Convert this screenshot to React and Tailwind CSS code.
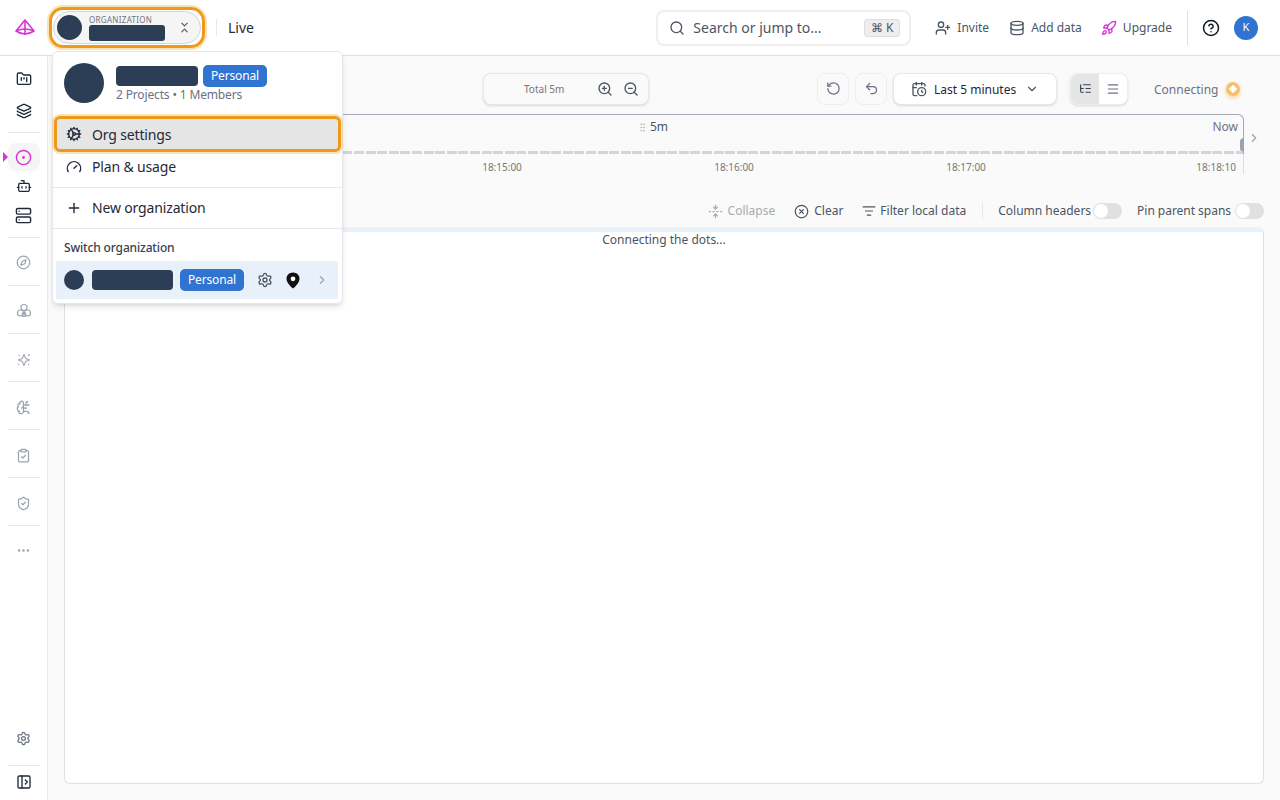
import {
  Search, UserPlus, Database, Rocket, CircleHelp, RotateCcw, Undo2, CalendarClock, ChevronDown,
  ListTree, Menu, ZoomIn, ZoomOut, GripVertical, CircleX, ListFilter, ChevronsDownUp, FolderKanban,
  Layers, CircleDot, Bot, Server, Compass, BrainCircuit, ClipboardCheck, ShieldCheck,
  Ellipsis, Settings, PanelLeftOpen, Cog, Gauge, Plus, ChevronRight, FoldVertical,
} from 'lucide-react';

const font = "font-['Noto_Sans',sans-serif]";

function Logo() {
  return (
    <svg width="22" height="20" viewBox="0 0 22 20" fill="none" stroke="#d633d6" strokeWidth="1.6" strokeLinejoin="round">
      <path d="M11 2 L20 13 Q11 19 2 13 Z" />
      <path d="M2 13 Q11 9 20 13" />
      <path d="M11 2 V17" />
    </svg>
  );
}

function Cluster() {
  return (
    <svg width="16" height="16" viewBox="0 0 16 16" fill="none" stroke="#9ca3af" strokeWidth="1.1">
      <circle cx="8" cy="4.5" r="3" />
      <circle cx="4.5" cy="10" r="3" />
      <circle cx="11.5" cy="10" r="3" />
      <circle cx="8" cy="11.5" r="2" />
    </svg>
  );
}

function Spark() {
  return (
    <svg width="16" height="16" viewBox="0 0 16 16" fill="none" stroke="#9ca3af" strokeWidth="1.1" strokeLinejoin="round">
      <path d="M8 2.5 L9.6 6.4 L13.5 8 L9.6 9.6 L8 13.5 L6.4 9.6 L2.5 8 L6.4 6.4 Z" />
      <circle cx="13" cy="3" r="0.9" fill="#9ca3af" stroke="none" />
      <circle cx="3" cy="3.5" r="0.7" fill="#9ca3af" stroke="none" />
      <circle cx="2.5" cy="12.5" r="0.7" fill="#9ca3af" stroke="none" />
      <circle cx="12.5" cy="12.5" r="0.7" fill="#9ca3af" stroke="none" />
    </svg>
  );
}

function Pin() {
  return (
    <svg width="14" height="17" viewBox="0 0 14 17" className="ml-[13px]">
      <path d="M7 0.5 C3.2 0.5 0.5 3.3 0.5 6.8 C0.5 11 5 15 7 16.5 C9 15 13.5 11 13.5 6.8 C13.5 3.3 10.8 0.5 7 0.5 Z" fill="#111111" />
      <circle cx="7" cy="6.8" r="2.4" fill="#ffffff" />
    </svg>
  );
}

function Divider() {
  return <div className="h-px w-[32px] bg-[#e5e7eb] shrink-0" />;
}

function Sidebar() {
  return (
    <aside className="w-[48px] shrink-0 bg-white border-r border-[#e5e7eb] flex flex-col items-center pt-[14px] pb-[10px]">
      <FolderKanban size={16} className="text-[#1f2937] my-[1px]" />
      <Layers size={16} className="text-[#1f2937] mt-[15px]" />
      <div className="mt-[13px]"><Divider /></div>
      <div className="relative mt-[10px] w-[32px] h-[28px] rounded-lg bg-[#f5f5f5] flex items-center justify-center">
        <span className="absolute left-[-5px] top-[9px] w-0 h-0 border-y-[5px] border-y-transparent border-l-[5px] border-l-[#d633d6]" />
        <CircleDot size={17} className="text-[#d633d6] [&>circle:last-child]:fill-current" />
      </div>
      <Bot size={16} className="text-[#1f2937] mt-[7px]" />
      <Server size={17} className="text-[#1f2937] mt-[13px]" />
      <div className="mt-[13px]"><Divider /></div>
      <Compass size={15} className="text-[#9ca3af] mt-[17px]" />
      <div className="mt-[15px]"><Divider /></div>
      <div className="mt-[17px]"><Cluster /></div>
      <div className="mt-[14px]"><Divider /></div>
      <div className="mt-[18px] h-[15px] flex items-center"><Spark /></div>
      <div className="mt-[14px]"><Divider /></div>
      <BrainCircuit size={15} className="text-[#9ca3af] mt-[18px]" />
      <div className="mt-[14px]"><Divider /></div>
      <ClipboardCheck size={15} className="text-[#9ca3af] mt-[18px]" />
      <div className="mt-[14px]"><Divider /></div>
      <ShieldCheck size={15} className="text-[#9ca3af] mt-[18px]" />
      <div className="mt-[14px]"><Divider /></div>
      <Ellipsis size={15} className="text-[#9ca3af] mt-[17px]" />
      <Settings size={15} className="text-[#6b7280] mt-auto" />
      <div className="mt-[19px]"><Divider /></div>
      <PanelLeftOpen size={16} className="text-[#1f2937] mt-[8px]" />
    </aside>
  );
}

function Header() {
  return (
    <header className="h-[56px] shrink-0 bg-white border-b border-[#e0e0e0] flex items-center pl-[14px] pr-[22px]">
      <Logo />
      <div className="ml-[13px] w-[156px] h-[41px] rounded-[14px] border-[3px] border-[#ec9a1d] shadow-[0_0_0_2px_rgba(245,158,11,0.3)] p-[1px]">
        <div className="h-full rounded-full border border-[#d1d5db] bg-[#f5f5f5] flex items-center pl-[3px] pr-[9px]">
          <div className="w-[25px] h-[25px] rounded-full bg-[#2c3e56] shrink-0" />
          <div className="ml-[7px] flex flex-col">
            <span className="text-[8px] leading-[9px] tracking-[0.3px] text-[#6b7280]">ORGANIZATION</span>
            <div className="mt-[1px] w-[76px] h-[16px] rounded-[3px] bg-[#2c3e56]" />
          </div>
          <ChevronsDownUp size={13} className="ml-auto text-[#4b5563]" />
        </div>
      </div>
      <div className="ml-[11px] w-px h-[17px] bg-[#e5e7eb]" />
      <span className="ml-[11px] text-[14px] text-[#1f2937]">Live</span>
      <div className="ml-auto w-[255px] h-[36px] rounded-lg border-2 border-[#eeeeee] flex items-center pl-[11px] pr-[9px] text-[#4b5563]">
        <Search size={16} />
        <span className="ml-[8px] text-[14px]">Search or jump to...</span>
        <span className="ml-auto h-[18px] px-[6px] rounded-[3px] border border-[#dddddd] bg-[#eeeeee] text-[12px] leading-[16px] text-[#4b5563]">⌘ K</span>
      </div>
      <div className="ml-[24px] flex items-center gap-[6px] text-[12px] text-[#4b5563]"><UserPlus size={16} />Invite</div>
      <div className="ml-[20px] flex items-center gap-[6px] text-[12px] text-[#4b5563]"><Database size={16} />Add data</div>
      <div className="ml-[19px] flex items-center gap-[6px] text-[12px] text-[#4b5563]"><Rocket size={16} className="text-[#d633d6]" />Upgrade</div>
      <div className="ml-[15px] w-px h-[34px] bg-[#e0e0e0]" />
      <CircleHelp size={18} className="ml-[14px] text-[#111827]" />
      <div className="ml-[14px] w-[24px] h-[24px] rounded-full bg-[#2f74d0] text-white text-[11px] flex items-center justify-center">K</div>
    </header>
  );
}

function Toggle() {
  return (
    <span className="w-[29px] h-[16px] rounded-full bg-[#e0e0e0] flex items-center pl-[1px]">
      <span className="w-[14px] h-[14px] rounded-full bg-white" />
    </span>
  );
}

function Toolbar() {
  return (
    <div className="h-[33px] flex items-center">
      <div className="ml-[419px] w-[166px] h-[32px] rounded-lg border border-[#e5e7eb] bg-[#fafafa] shadow-sm flex items-center text-[#4b5563]">
        <span className="ml-[40px] pt-[2px] text-[10px] text-[#777777]">Total 5m</span>
        <ZoomIn size={16} className="ml-[33px]" />
        <ZoomOut size={16} className="ml-[10px]" />
      </div>
      <button className="ml-[168px] w-[32px] h-[32px] rounded-lg border border-[#eeeeee] flex items-center justify-center text-[#6b7280]"><RotateCcw size={15} /></button>
      <button className="ml-[6px] w-[32px] h-[32px] rounded-lg border border-[#eeeeee] flex items-center justify-center text-[#6b7280]"><Undo2 size={15} /></button>
      <button className="ml-[6px] w-[164px] h-[32px] rounded-lg border border-[#e5e7eb] bg-white shadow-sm flex items-center pl-[17px] text-[12px] text-[#1f2937]">
        <CalendarClock size={16} className="text-[#4b5563]" />
        <span className="ml-[7px] pt-[2px]">Last 5 minutes</span>
        <ChevronDown size={14} className="ml-[9px] text-[#4b5563]" />
      </button>
      <div className="ml-[13px] w-[58px] h-[32px] rounded-lg border border-[#eeeeee] bg-white shadow-sm flex overflow-hidden text-[#6b7280]">
        <span className="w-[29px] bg-[#e5e5e5] flex items-center justify-center"><ListTree size={13} className="text-[#374151]" /></span>
        <span className="w-[29px] flex items-center justify-center"><Menu size={14} /></span>
      </div>
      <span className="ml-[26px] pt-[2px] text-[12px] text-[#6b7280]">Connecting</span>
      <span className="ml-[8px] w-[14px] h-[14px] rounded-full bg-[#f5c26b] shadow-[0_2px_4px_rgba(245,158,11,0.4)] flex items-center justify-center">
        <span className="w-[6px] h-[6px] rotate-45 bg-white" />
      </span>
    </div>
  );
}

function Timeline() {
  return (
    <div className="mt-[9px] flex">
      <div className="w-[1180px] shrink-0">
        <div className="relative h-[40px] rounded-t-md border-t border-r border-[#a3a8b4]">
          <div className="pt-[3px] ml-[573px] flex items-center text-[12px] text-[#4b5563]">
            <GripVertical size={11} className="text-[#b8b8b8]" />
            <span className="ml-[2px]">5m</span>
          </div>
          <span className="absolute right-[5px] top-[3px] text-[12px] text-[#6b7280]">Now</span>
          <span className="absolute right-[-1px] top-[23px] w-[4px] h-[14px] rounded-l-sm bg-[#9ca3af]" />
          <div className="absolute left-0 right-0 bottom-0 h-[3px] bg-[repeating-linear-gradient(90deg,#d1d5db_0_10px,transparent_10px_11.6px)]" />
        </div>
        <div className="h-[20px] border-r border-[#dddddd] flex justify-end text-[10px] leading-[27px] text-[#777777]">
          <span className="w-[232px] text-center">18:15:00</span>
          <span className="w-[232px] text-center">18:16:00</span>
          <span className="w-[232px] text-center">18:17:00</span>
          <span className="w-[161px] text-right pr-[7px]">18:18:10</span>
        </div>
      </div>
      <ChevronRight size={14} className="ml-[3px] mt-[17px] text-[#9ca3af]" />
    </div>
  );
}

function TraceActions() {
  return (
    <div className="mt-[27px] h-[20px] flex items-center justify-end text-[12px] text-[#4b5563]">
      <span className="flex items-center gap-[5px] text-[#aaaaaa]"><FoldVertical size={15} />Collapse</span>
      <span className="ml-[19px] flex items-center gap-[5px]"><CircleX size={15} />Clear</span>
      <span className="ml-[19px] flex items-center gap-[4px]"><ListFilter size={14} />Filter local data</span>
      <span className="ml-[16px] w-px h-[16px] bg-[#e5e7eb]" />
      <span className="ml-[15px]">Column headers</span>
      <span className="ml-[2px]"><Toggle /></span>
      <span className="ml-[15px] tracking-[-0.03px]">Pin parent spans</span>
      <span className="ml-[4px]"><Toggle /></span>
    </div>
  );
}

function OrgMenu() {
  return (
    <div className={`absolute left-[52px] top-[51px] w-[291px] h-[253px] rounded-md border border-[#e5e7eb] bg-white shadow-md tracking-[-0.15px] ${font}`}>
      <div className="flex pl-[11px] pt-[11px]">
        <div className="w-[40px] h-[40px] rounded-full bg-[#2c3e56]" />
        <div className="ml-[12px] pt-[2px]">
          <div className="flex items-center">
            <div className="w-[82px] h-[20px] rounded-[4px] bg-[#2c3e56]" />
            <span className="ml-[5px] w-[64px] h-[22px] rounded-[5px] bg-[#2f74d0] text-white text-[12px] leading-[22px] text-center">Personal</span>
          </div>
          <div className="text-[12px] leading-[16px] text-[#6b7280]">2 Projects • 1 Members</div>
        </div>
      </div>
      <div className="mt-[13px] mx-[1px] h-[36px] rounded-md border-[3px] border-[#ec9a1d] shadow-[0_0_0_2px_rgba(245,158,11,0.3)] bg-[#e5e5e5] flex items-center pl-[9px] text-[14px] text-[#1f2937]">
        <Cog size={16} />
        <span className="ml-[10px]">Org settings</span>
      </div>
      <div className="h-[35px] pb-[6px] pl-[13px] flex items-center text-[14px] text-[#1f2937]">
        <Gauge size={16} />
        <span className="ml-[10px]">Plan & usage</span>
      </div>
      <div className="h-px bg-[#e5e7eb]" />
      <div className="h-[40px] pb-[1px] pl-[13px] flex items-center text-[14px] text-[#1f2937]">
        <Plus size={16} />
        <span className="ml-[10px]">New organization</span>
      </div>
      <div className="h-px bg-[#e5e7eb]" />
      <div className="pl-[11px] pt-[11px] text-[12px] leading-[16px] font-medium text-[#374151]">Switch organization</div>
      <div className="mt-[5px] ml-[3px] mr-[4px] h-[38px] bg-[#e8f0fa] flex items-center pl-[8px]">
        <div className="w-[20px] h-[20px] rounded-full bg-[#2c3e56]" />
        <div className="ml-[8px] w-[81px] h-[20px] rounded-[4px] bg-[#2c3e56]" />
        <span className="ml-[7px] w-[64px] h-[22px] rounded-[5px] bg-[#2f74d0] text-white text-[12px] leading-[22px] text-center">Personal</span>
        <Settings size={16} className="ml-[13px] text-[#4b5563]" />
        <Pin />
        <ChevronRight size={14} className="ml-[15px] text-[#9ca3af]" />
      </div>
    </div>
  );
}

export default function App() {
  return (
    <div className={`relative w-[1280px] h-[800px] overflow-hidden flex flex-col bg-white ${font}`}>
      <Header />
      <div className="flex-1 flex min-h-0">
        <Sidebar />
        <main className="flex-1 bg-[#fafafa] pl-[16px] pr-[16px] pt-[16px] pb-[16px] flex flex-col">
          <Toolbar />
          <Timeline />
          <TraceActions />
          <div className="mt-[6px] flex-1 rounded-md border border-[#e0e0e0] border-t-[5px] border-t-[#e8f0fa] bg-white text-center text-[12px] leading-[16px] text-[#4b5563]">
            Connecting the dots...
          </div>
        </main>
      </div>
      <OrgMenu />
    </div>
  );
}
